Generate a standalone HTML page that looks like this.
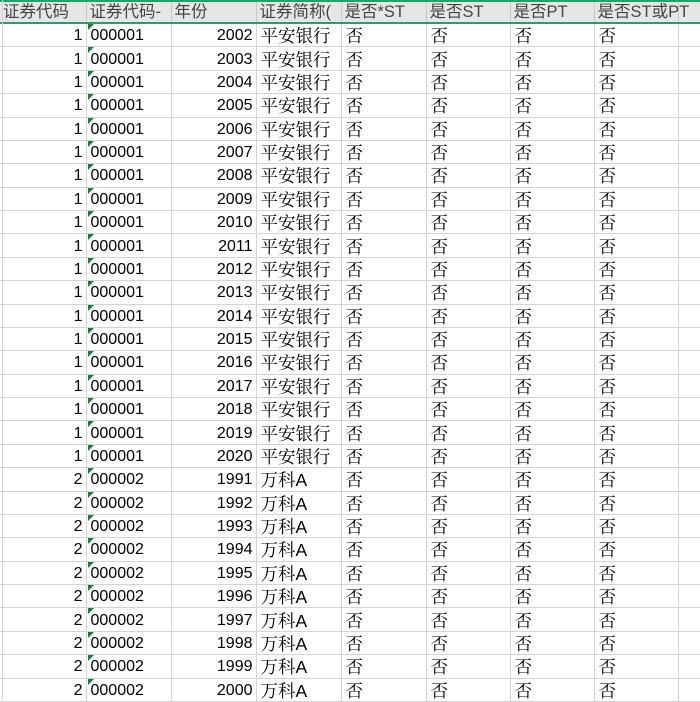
<!DOCTYPE html>
<html><head><meta charset="utf-8"><style>
body{margin:0;width:700px;height:700px;overflow:hidden;background:#fff;font-family:"Liberation Sans","Noto Serif CJK SC",serif;}
table{border-collapse:collapse;table-layout:fixed;position:absolute;left:0;top:0;width:708px;}
td{border:1px solid #d4d4d4;border-top:none;border-left:none;height:20.38px;padding:2px 2px 0 4px;font-size:16px;color:#000;white-space:nowrap;overflow:hidden;line-height:20px;position:relative;}
td.c{font-size:17.5px;}
tr.h td{background:#e6e6e6;color:#444;font-family:"Liberation Sans","Noto Sans CJK SC",sans-serif;font-size:16.5px;height:20px;padding-top:0;border-top:2px solid #21a366;border-bottom:2px solid #21a366;border-right:1px solid #c8c8c8;line-height:20px;padding-left:3px;overflow:visible}
tr.h td.z{z-index:2;}
tr.h td.z span{position:relative;z-index:3}
td.r{text-align:right;padding-right:3px}
td.g::before{content:"";position:absolute;left:1px;top:0;border-top:6px solid #1e7a32;border-right:6px solid transparent;}
</style></head><body>
<table>
<colgroup><col style="width:86px"><col style="width:85px"><col style="width:85px"><col style="width:85px"><col style="width:85px"><col style="width:84px"><col style="width:84px"><col style="width:84px"><col style="width:40px"></colgroup>
<tr class="h"><td>证券代码</td><td>证券代码-</td><td>年份</td><td style="overflow:hidden">证券简称(</td><td>是否*ST</td><td>是否ST</td><td>是否PT</td><td class="z"><span>是否ST或PT</span></td><td></td></tr>
<tr><td class="r">1</td><td class="g">000001</td><td class="r">2002</td><td class="c">平安银行</td><td class="c">否</td><td class="c">否</td><td class="c">否</td><td class="c">否</td><td></td></tr>
<tr><td class="r">1</td><td class="g">000001</td><td class="r">2003</td><td class="c">平安银行</td><td class="c">否</td><td class="c">否</td><td class="c">否</td><td class="c">否</td><td></td></tr>
<tr><td class="r">1</td><td class="g">000001</td><td class="r">2004</td><td class="c">平安银行</td><td class="c">否</td><td class="c">否</td><td class="c">否</td><td class="c">否</td><td></td></tr>
<tr><td class="r">1</td><td class="g">000001</td><td class="r">2005</td><td class="c">平安银行</td><td class="c">否</td><td class="c">否</td><td class="c">否</td><td class="c">否</td><td></td></tr>
<tr><td class="r">1</td><td class="g">000001</td><td class="r">2006</td><td class="c">平安银行</td><td class="c">否</td><td class="c">否</td><td class="c">否</td><td class="c">否</td><td></td></tr>
<tr><td class="r">1</td><td class="g">000001</td><td class="r">2007</td><td class="c">平安银行</td><td class="c">否</td><td class="c">否</td><td class="c">否</td><td class="c">否</td><td></td></tr>
<tr><td class="r">1</td><td class="g">000001</td><td class="r">2008</td><td class="c">平安银行</td><td class="c">否</td><td class="c">否</td><td class="c">否</td><td class="c">否</td><td></td></tr>
<tr><td class="r">1</td><td class="g">000001</td><td class="r">2009</td><td class="c">平安银行</td><td class="c">否</td><td class="c">否</td><td class="c">否</td><td class="c">否</td><td></td></tr>
<tr><td class="r">1</td><td class="g">000001</td><td class="r">2010</td><td class="c">平安银行</td><td class="c">否</td><td class="c">否</td><td class="c">否</td><td class="c">否</td><td></td></tr>
<tr><td class="r">1</td><td class="g">000001</td><td class="r">2011</td><td class="c">平安银行</td><td class="c">否</td><td class="c">否</td><td class="c">否</td><td class="c">否</td><td></td></tr>
<tr><td class="r">1</td><td class="g">000001</td><td class="r">2012</td><td class="c">平安银行</td><td class="c">否</td><td class="c">否</td><td class="c">否</td><td class="c">否</td><td></td></tr>
<tr><td class="r">1</td><td class="g">000001</td><td class="r">2013</td><td class="c">平安银行</td><td class="c">否</td><td class="c">否</td><td class="c">否</td><td class="c">否</td><td></td></tr>
<tr><td class="r">1</td><td class="g">000001</td><td class="r">2014</td><td class="c">平安银行</td><td class="c">否</td><td class="c">否</td><td class="c">否</td><td class="c">否</td><td></td></tr>
<tr><td class="r">1</td><td class="g">000001</td><td class="r">2015</td><td class="c">平安银行</td><td class="c">否</td><td class="c">否</td><td class="c">否</td><td class="c">否</td><td></td></tr>
<tr><td class="r">1</td><td class="g">000001</td><td class="r">2016</td><td class="c">平安银行</td><td class="c">否</td><td class="c">否</td><td class="c">否</td><td class="c">否</td><td></td></tr>
<tr><td class="r">1</td><td class="g">000001</td><td class="r">2017</td><td class="c">平安银行</td><td class="c">否</td><td class="c">否</td><td class="c">否</td><td class="c">否</td><td></td></tr>
<tr><td class="r">1</td><td class="g">000001</td><td class="r">2018</td><td class="c">平安银行</td><td class="c">否</td><td class="c">否</td><td class="c">否</td><td class="c">否</td><td></td></tr>
<tr><td class="r">1</td><td class="g">000001</td><td class="r">2019</td><td class="c">平安银行</td><td class="c">否</td><td class="c">否</td><td class="c">否</td><td class="c">否</td><td></td></tr>
<tr><td class="r">1</td><td class="g">000001</td><td class="r">2020</td><td class="c">平安银行</td><td class="c">否</td><td class="c">否</td><td class="c">否</td><td class="c">否</td><td></td></tr>
<tr><td class="r">2</td><td class="g">000002</td><td class="r">1991</td><td class="c">万科A</td><td class="c">否</td><td class="c">否</td><td class="c">否</td><td class="c">否</td><td></td></tr>
<tr><td class="r">2</td><td class="g">000002</td><td class="r">1992</td><td class="c">万科A</td><td class="c">否</td><td class="c">否</td><td class="c">否</td><td class="c">否</td><td></td></tr>
<tr><td class="r">2</td><td class="g">000002</td><td class="r">1993</td><td class="c">万科A</td><td class="c">否</td><td class="c">否</td><td class="c">否</td><td class="c">否</td><td></td></tr>
<tr><td class="r">2</td><td class="g">000002</td><td class="r">1994</td><td class="c">万科A</td><td class="c">否</td><td class="c">否</td><td class="c">否</td><td class="c">否</td><td></td></tr>
<tr><td class="r">2</td><td class="g">000002</td><td class="r">1995</td><td class="c">万科A</td><td class="c">否</td><td class="c">否</td><td class="c">否</td><td class="c">否</td><td></td></tr>
<tr><td class="r">2</td><td class="g">000002</td><td class="r">1996</td><td class="c">万科A</td><td class="c">否</td><td class="c">否</td><td class="c">否</td><td class="c">否</td><td></td></tr>
<tr><td class="r">2</td><td class="g">000002</td><td class="r">1997</td><td class="c">万科A</td><td class="c">否</td><td class="c">否</td><td class="c">否</td><td class="c">否</td><td></td></tr>
<tr><td class="r">2</td><td class="g">000002</td><td class="r">1998</td><td class="c">万科A</td><td class="c">否</td><td class="c">否</td><td class="c">否</td><td class="c">否</td><td></td></tr>
<tr><td class="r">2</td><td class="g">000002</td><td class="r">1999</td><td class="c">万科A</td><td class="c">否</td><td class="c">否</td><td class="c">否</td><td class="c">否</td><td></td></tr>
<tr><td class="r">2</td><td class="g">000002</td><td class="r">2000</td><td class="c">万科A</td><td class="c">否</td><td class="c">否</td><td class="c">否</td><td class="c">否</td><td></td></tr>
</table>
<div style="position:absolute;left:2px;top:0;width:1px;height:700px;background:#d4d4d4"></div>
</body></html>
